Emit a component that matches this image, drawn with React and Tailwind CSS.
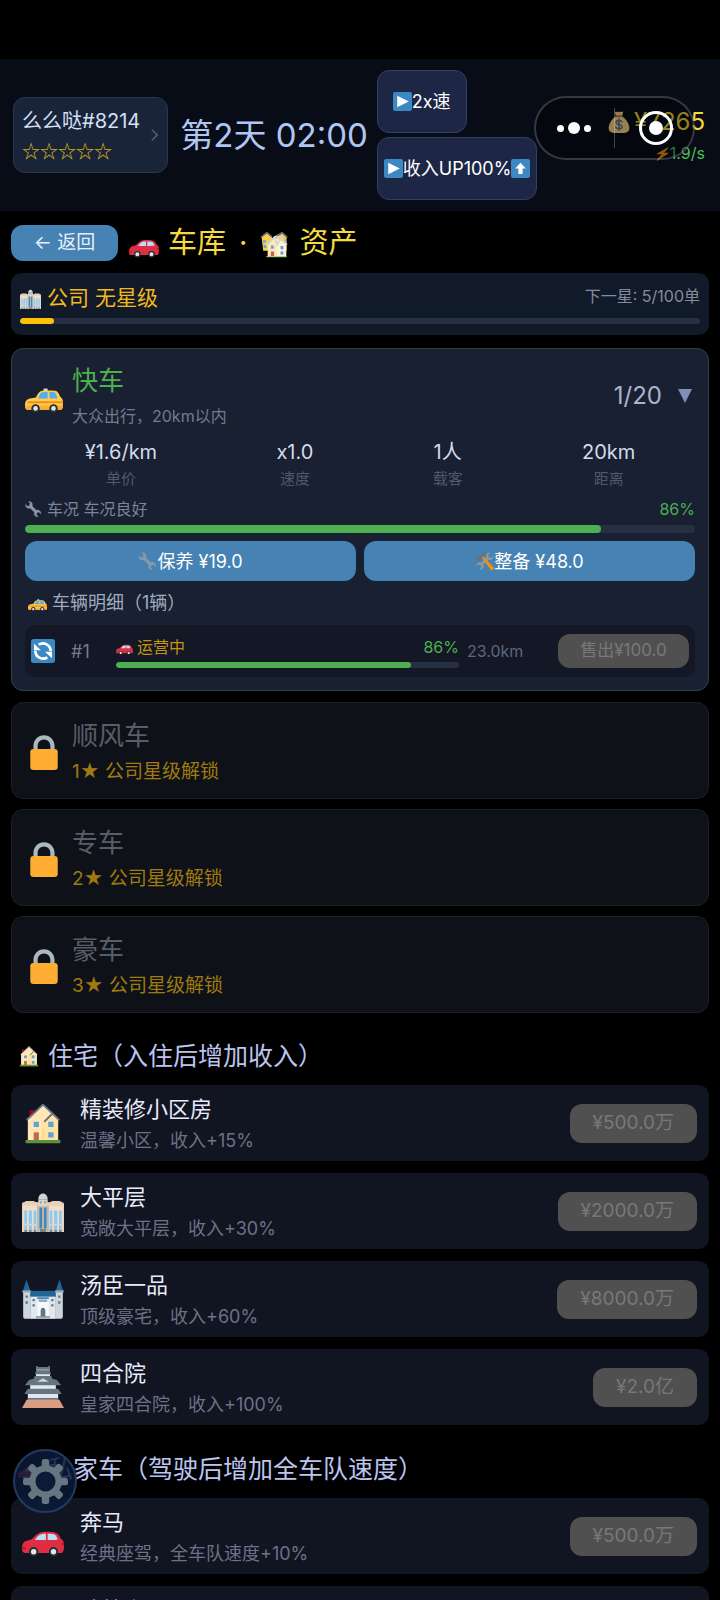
const FONT = "font-['Inter','Noto_Sans_CJK_SC',sans-serif]";

function Icon({ className, children }) {
  return (
    <svg viewBox="0 0 36 36" className={`shrink-0 ${className}`} aria-hidden="true">
      {children}
    </svg>
  );
}

function RedCar({ className }) {
  return (
    <Icon className={className}>
      <path fill="#DD2E44" d="M0 29c0-4 1-6 4-7 1.500-.5 3-.5 4.500-1.500 2-1.500 4.500-5 8-5.700 3-.5 8-.5 11.500.2 3 .6 4.500 3.500 5.500 5.500 2 1 2.500 3 2.500 6 0 3.500-.5 5.500-2 6H2.500C1 32.500 0 31.500 0 29z" />
      <path fill="#BBDDF5" d="M11 21.500c1.500-2.500 3.500-4.500 5.500-5 1.200-.3 2.500-.4 4-.4v5.400zM22 16.100c2 0 4 0 5.500.4 1.500.5 2.500 2.500 3 4.500-.8.5-5.500.5-8.500.5z" />
      <path fill="#A0041E" d="M0 27.500h3v2H.2zM33.500 24H36v2h-2z" opacity=".5" />
      <circle cx="10" cy="31.500" r="4" fill="#292F33" />
      <circle cx="27" cy="31.500" r="4" fill="#292F33" />
      <circle cx="10" cy="31.500" r="2.300" fill="#E1E8ED" />
      <circle cx="27" cy="31.500" r="2.300" fill="#E1E8ED" />
    </Icon>
  );
}

function Taxi({ className }) {
  return (
    <Icon className={className}>
      <g transform="translate(0 -2.500)">
        <rect x="17.500" y="12.500" width="4" height="3" rx="1" fill="#CCD6DD" />
        <path fill="#FFCC4D" d="M0 29c0-4 1-6 4.500-7 2-.6 4.500-.6 6-1.200C12 17.500 13.500 15 16 14.600c3-.4 10-.4 13 0 2 .4 3.500 3.400 4.500 6 2 .8 2.500 3 2.500 6 0 3.500-.5 5.400-2 5.900H2.500C.8 32.500 0 31 0 29z" />
        <path fill="#F4900C" d="M3.500 24.500H36v2H2c.3-1 .8-1.700 1.500-2z" />
        <path fill="#FFAC33" d="M0 28.500h36c0 2.500-.8 4-2 4H2.500C1 32.500 0 31 0 28.500z" />
        <path fill="#55ACEE" d="M12.500 22c.8-2.500 2-5.500 4-5.900 1.200-.2 3.500-.3 5-.3V22zM23.200 15.800c2 0 4 .1 5 .5 1 .4 2 3.200 2.500 5.700h-7.500z" />
        <circle cx="10" cy="31.300" r="4" fill="#292F33" />
        <circle cx="27" cy="31.300" r="4" fill="#292F33" />
        <circle cx="10" cy="31.300" r="2.200" fill="#E1E8ED" />
        <circle cx="27" cy="31.300" r="2.200" fill="#E1E8ED" />
      </g>
    </Icon>
  );
}

function House({ className }) {
  return (
    <Icon className={className}>
      <path fill="#A0041E" d="M6.500 7h4v7h-4z" />
      <path fill="#FFE8B6" d="M5 14.500 18 2.500l13 12V33H5z" />
      <path fill="#FFD983" d="M16.500 18.500 26 9.500l5 5V33H16.500z" opacity=".35" />
      <path fill="none" stroke="#66757F" strokeWidth="1.600" strokeLinecap="round" strokeLinejoin="round" d="M4.500 15 18 2.300 31.500 15M19.500 16.500l6-6" />
      <path fill="#5DA2D9" d="M10 17h4.500v4.500H10zM22.500 17H27v4.500h-4.500zM22.500 26H27v4.500h-4.500z" />
      <path fill="#C1694F" d="M10 26h4.500v7H10z" />
      <path fill="#FFCC4D" d="M17.500 22h1v11h-1z" opacity=".6" />
      <rect x="3" y="32.500" width="30" height="2.800" rx=".8" fill="#5C913B" />
    </Icon>
  );
}

function Houses({ className }) {
  return (
    <Icon className={className}>
      <path fill="#FFCC4D" d="M2 10 8.500 5l7 6v16H4z" />
      <path fill="#FFCC4D" d="M21 10l7-5 5 5v17H21z" />
      <path fill="none" stroke="#66757F" strokeWidth="1.800" strokeLinejoin="round" d="m1 10.500 7.500-6 6 5M20 8.500l7.500-4 6.500 6" />
      <path fill="#55ACEE" d="M4 13.500h3V17H4zM4.500 20H8v3.500H4.500zM30 13h2.500v3.500H30z" />
      <path fill="#FFE8B6" d="M9.500 19 19 9.500l13.500 10V34h-23z" />
      <path fill="#FFF3D6" d="M21 20.500 26 14l6.500 6V34H21z" />
      <path fill="none" stroke="#CCD6DD" strokeWidth="2" strokeLinejoin="round" strokeLinecap="round" d="M8.500 20 18.500 9.500H26L33 19M18.500 9.500 21 20l5.500-8" />
      <path fill="#5DA2D9" d="M13.500 20.500H17v4h-3.500zM25.500 21H29v4h-3.500zM25.500 28H29v3.500h-3.500z" />
      <path fill="#C1694F" d="M13.500 28h4v6h-4z" />
      <path fill="#A6D388" d="M8 33.500h25V35H8z" />
    </Icon>
  );
}

function Tower({ className }) {
  return (
    <Icon className={className}>
      <path fill="#CCD6DD" d="M14 8c0-3 1.800-5 4-5s4 2 4 5z" />
      <path fill="#E6D3BB" d="M0 12c0-1.200 1-1.500 2-1.500.5-1 2-1 3-1h4.500c1 0 1.500 1 3.500 1h1V8h8v2.500h1c2 0 2.500-1 3.500-1H31c1 0 2.500 0 3 1 1 0 2 .3 2 1.500V36H0z" />
      <path fill="#FFE8D0" d="M1 13.500h12V34H1zM23 13.500h12V34H23z" opacity=".5" />
      <path fill="#88C9F9" d="M2 17.500h2.300V34H2zM5.800 17.500h2.700V34H5.800zM10 17.500h2.300V34H10zM23.700 17.500H26V34h-2.300zM27.500 17.500h2.700V34h-2.700zM31.700 17.500H34V34h-2.300z" />
      <path fill="#CCB8A0" d="M14 14h8v22h-8z" />
      <path fill="#3B88C3" d="M15 15h2.200v18H15zM18.800 15H21v18h-2.200z" />
      <path fill="#5DADEC" d="M15.500 9.500h1.300v2h-1.300zM19.200 9.500h1.300v2h-1.300z" />
      <path fill="#E6D3BB" d="M0 29h14v1.200H0zM22 29h14v1.200H22z" />
      <path fill="#99AAB5" d="M13.300 13h.8v23h-.8zM21.900 13h.8v23h-.8z" />
      <path fill="#66757F" d="M2 34h2.300v2H2zM6 34h2.300v2H6zM10 34h2.300v2H10zM15.500 33.500h5V36h-5zM23.700 34H26v2h-2.300zM27.700 34H30v2h-2.300zM31.700 34H34v2h-2.300z" opacity=".8" />
    </Icon>
  );
}

function Castle({ className }) {
  return (
    <Icon className={className}>
      <path fill="#226699" d="M6 11h24v5.500H6z" />
      <path fill="#CCD6DD" d="M1 12h6v23H3c-1.200 0-2-.8-2-2zM29 12h6v21c0 1.200-.8 2-2 2h-4z" />
      <path fill="#E1E8ED" d="M7 16h22v19H7z" />
      <path fill="#F5F8FA" d="M13 20h10v15H13z" />
      <path fill="#269" d="M3.800 1.500 7.300 11H.8zM32.200 1.500 35.300 11h-6.500z" />
      <path fill="#99AAB5" d="M.3 10.500h7.200v2H.3zM28.500 10.500h7.200v2h-7.200z" />
      <path fill="#3B88C3" d="M13 16.500h10V18H13z" />
      <path fill="#66757F" d="M3 15h2v2H3zM3 20h2v2H3zM31 15h2v2h-2zM31 20h2v2h-2zM9 18h2v2H9zM9 22.500h2v2H9zM25 18h2v2h-2zM25 22.500h2v2h-2z" />
      <path fill="#99AAB5" d="M14.500 18.500h7v2h-7zM12 32.500h12V35H12z" />
      <path fill="#66757F" d="M16 28c0-1.500.8-2.500 2-2.500s2 1 2 2.500v5h-4z" />
    </Icon>
  );
}

function Pagoda({ className }) {
  return (
    <Icon className={className}>
      <path fill="#E1E8ED" d="M12 6h12v5H12zM7 14h22v6H7zM5 22h26v7H5z" />
      <path fill="#66757F" d="M12 0h1.500v.8h9V0H24v4.500l1 2.500H11l1-2.500zM11 8.500h14l1 2.500 4 1 3.500 4.500h-31L6 12l4-1z" />
      <path fill="#8899A6" d="M12.500 2.500h11v1.500h-11z" />
      <path fill="#CCD6DD" d="m18 10.500 5 3H13z" />
      <path fill="#66757F" d="M5 19.500h26l3 4.500H2zM5 27.500h26V29H5z" />
      <path fill="#D99E82" d="M4 29h28l4 7H0z" />
    </Icon>
  );
}

function Lock({ className }) {
  return (
    <Icon className={className}>
      <path fill="#AAB8C2" d="M18 3C12.500 3 8 7.500 8 13v10h4V13c0-3.300 2.700-6 6-6s6 2.700 6 6v10h4V13c0-5.500-4.500-10-10-10z" />
      <rect x="5" y="16" width="26" height="20" rx="3" fill="#FFAC33" />
    </Icon>
  );
}

const WRENCH =
  "M9.800 1.200c3.500-.6 7 1.600 7.700 5.300.3 1.600.1 3-.5 4.300l9 9c1.300-.6 2.900-.8 4.400-.4 3.400.8 5.500 4 5.200 7.400l-4.200-3.300-4.300 1-1 4.300 3.300 4.500c-3.600.6-7-1.600-7.700-5.300-.3-1.500-.1-2.900.4-4.100l-9.200-9.200c-1.300.6-2.800.8-4.300.4C5 14.300 2.800 11 3.300 7.500l4.200 3.600 4.300-1.300 1-4.300z";

function Wrench({ className }) {
  return (
    <Icon className={className}>
      <path fill="#8899A6" stroke="#8899A6" strokeWidth="1" d={WRENCH} transform="translate(-2 0)" />
    </Icon>
  );
}

function Tools({ className }) {
  return (
    <Icon className={className}>
      <path fill="#8899A6" d={WRENCH} transform="matrix(-1 0 0 1 38 0)" />
      <path fill="#F4900C" d="m13 11 3-3 19 21c1 1.200 1 2.500 0 3.500l-1.500 1.500c-1 1-2.300 1-3.300 0z" />
      <path fill="#66757F" d="M2 14 14.500 2.500C17 1 21 1.500 23 3c-3 0-4.500 1.500-5 3.500L9 15.500l-3.500 2z" />
    </Icon>
  );
}

function Cycle({ className }) {
  return (
    <Icon className={className}>
      <rect width="36" height="36" rx="4" fill="#3B88C3" />
      <path fill="none" stroke="#fff" strokeWidth="4" d="M11.500 8.500C19 3.500 29.500 9 29.500 18.500M24.500 27.500C17 32.500 6.500 27 6.500 17.500" />
      <path fill="#fff" d="M4.500 7v10H15zM31.500 29V19H21z" />
    </Icon>
  );
}

function Play({ className }) {
  return (
    <Icon className={className}>
      <rect width="36" height="36" rx="4" fill="#3B88C3" />
      <path fill="#fff" d="m8 7 22 11L8 29z" />
    </Icon>
  );
}

function ArrowUp({ className }) {
  return (
    <Icon className={className}>
      <rect width="36" height="36" rx="4" fill="#3B88C3" />
      <path fill="#fff" d="M18 7 8 18h6v10.500h8V18h6z" />
    </Icon>
  );
}

function MoneyBag({ className }) {
  return (
    <Icon className={className}>
      <path fill="#FDD888" d="M23 9c7 4 12 13 12 19 0 5-3 8-9 8H10c-6 0-9-3-9-8C1 22 6 13 13 9z" />
      <path fill="#FDD888" d="M11 1c2 1.500 3 .5 4-.3 1 1 2 1.300 3 .3 1 1 2 .7 3-.3 1 .8 2 1.800 4 .3l-2 7H13z" />
      <path fill="#BF6952" d="M12 7h12v3H12z" />
      <path fill="none" stroke="#67757F" strokeWidth="2.600" strokeLinecap="round" d="M23 18c-1-2-3-2.500-5-2.500-2.700 0-4.700 1.200-4.700 3.300 0 4.700 9.700 2.200 9.700 6.900 0 2.200-2.300 3.300-5 3.300-2.500 0-4.500-.8-5.300-2.800M18 13v18.500" />
    </Icon>
  );
}

function Bolt({ className }) {
  return (
    <Icon className={className}>
      <path fill="#F4900C" d="M31 3 5 18c-1 .8-.8 2 .5 2H16L5 33c-.8 1.200.2 2 1.500 1.500L32 18c1-.8.6-2-.7-2H22l10-11c1-1.300.2-2.500-1-2z" />
    </Icon>
  );
}

function Gear({ className }) {
  return (
    <Icon className={className}>
      <g fill="#66757F">
        <circle cx="18" cy="18" r="13" />
        <rect x="15" y="0" width="6" height="36" rx="2" />
        <rect x="15" y="0" width="6" height="36" rx="2" transform="rotate(45 18 18)" />
        <rect x="15" y="0" width="6" height="36" rx="2" transform="rotate(90 18 18)" />
        <rect x="15" y="0" width="6" height="36" rx="2" transform="rotate(135 18 18)" />
      </g>
      <circle cx="18" cy="18" r="8" fill="#0c1a38" />
    </Icon>
  );
}

const stats = [
  { value: "¥1.6/km", label: "单价" },
  { value: "x1.0", label: "速度" },
  { value: "1人", label: "载客" },
  { value: "20km", label: "距离" },
];

const lockedCars = [
  { name: "顺风车", stars: 1 },
  { name: "专车", stars: 2 },
  { name: "豪车", stars: 3 },
];

const homes = [
  { icon: House, name: "精装修小区房", desc: "温馨小区，收入+15%", price: "¥500.0万" },
  { icon: Tower, name: "大平层", desc: "宽敞大平层，收入+30%", price: "¥2000.0万" },
  { icon: Castle, name: "汤臣一品", desc: "顶级豪宅，收入+60%", price: "¥8000.0万" },
  { icon: Pagoda, name: "四合院", desc: "皇家四合院，收入+100%", price: "¥2.0亿" },
];

const cars = [
  { icon: RedCar, name: "奔马", desc: "经典座驾，全车队速度+10%", price: "¥500.0万" },
  { icon: RedCar, name: "法拉利", desc: "极速跑车，全车队速度+20%", price: "¥2000.0万" },
];

function Bar({ percent, className, fill }) {
  return (
    <div className={`overflow-hidden rounded-full bg-[#263043] ${className}`}>
      <div className={`h-full rounded-full ${fill}`} style={{ width: `${percent}%` }} />
    </div>
  );
}

function LockedCard({ name, stars }) {
  return (
    <div className="flex items-center gap-[9px] rounded-xl border border-[#1a1f28] bg-[#0e1218] px-[13px] pt-[10px] pb-[9px]">
      <Lock className="size-[38px]" />
      <div className="pt-1">
        <div className="text-[26px] leading-[38px] text-[#5a5d68]">{name}</div>
        <div className="text-[19px] leading-[34px] text-[#a07a10]">{stars}★ 公司星级解锁</div>
      </div>
    </div>
  );
}

function AssetRow({ icon: Glyph, name, desc, price }) {
  return (
    <div className="flex items-center rounded-[10px] bg-[#111421] py-1 pr-3 pl-[11px]">
      <Glyph className="size-[42px]" />
      <div className="ml-4 flex-1 pt-[5px]">
        <div className="text-[22px] leading-[30px] text-[#e8ebfa]">{name}</div>
        <div className="text-[18px] leading-[33px] text-[#6a7288]">{desc}</div>
      </div>
      <button disabled className="h-[39px] rounded-xl bg-[#505050] px-[23px] text-[19px] text-[#787878]">
        {price}
      </button>
    </div>
  );
}

function Header() {
  return (
    <header className="relative flex items-center bg-[#080c17] py-[11px] pr-[15px] pl-[13px] whitespace-nowrap">
      <button className="flex h-[76px] items-center gap-1 rounded-xl border border-[#2a3650] bg-[#1a2439] pr-2 pl-2 text-left">
        <span>
          <span className="block text-[20px] leading-[30px] text-[#d5e0f8]">么么哒#8214</span>
          <span className="block font-['Noto_Sans_CJK_SC'] text-[18px] leading-[28px] text-[#d4b41c]">☆☆☆☆☆</span>
        </span>
        <svg viewBox="0 0 10 16" className="ml-[6px] h-[14px] w-[9px] fill-none stroke-[#4f5b74] stroke-2" aria-hidden="true">
          <path d="m2 2 6 6-6 6" />
        </svg>
      </button>
      <div className="ml-3 text-[33px] leading-[40px] text-[#b0c6f2]">第2天 02:00</div>
      <div className="ml-[9px] flex flex-col items-start gap-1">
        <button className="flex h-[63px] items-center rounded-xl border border-[#333f60] bg-[#1d2745] px-[15px] text-[18px] text-white">
          <Play className="size-[19px]" />
          2x速
        </button>
        <button className="flex h-[63px] items-center rounded-xl border border-[#333f60] bg-[#1d2745] px-[6px] text-[18px] text-white">
          <Play className="size-[19px]" />
          收入UP100%
          <ArrowUp className="size-[19px]" />
        </button>
      </div>
      <div className="ml-auto flex flex-col items-end">
        <div className="flex items-center gap-1 text-[24px] leading-[36px] text-[#f5d936]">
          <MoneyBag className="size-[22px]" />
          ¥7265
        </div>
        <div className="flex items-center text-[16px] leading-[26px] text-[#4cbf58]">
          <Bolt className="size-[15px]" />
          1.9/s
        </div>
      </div>
      {/* host app capsule menu floats above the page */}
      <div className="absolute top-[37px] right-[25px] flex h-[64px] w-[161px] items-center rounded-full border-2 border-white/20 bg-black/40">
        <button aria-label="更多" className="flex flex-1 items-center justify-center gap-1 pr-[3px]">
          <span className="size-[7px] rounded-full bg-white" />
          <span className="size-[12px] rounded-full bg-white" />
          <span className="size-[7px] rounded-full bg-white" />
        </button>
        <span className="h-[40px] w-px bg-white/25" />
        <button aria-label="关闭" className="flex flex-1 items-center justify-center pl-[3px]">
          <span className="flex size-[34px] items-center justify-center rounded-full border-[3px] border-white">
            <span className="size-[14px] rounded-full bg-white" />
          </span>
        </button>
      </div>
    </header>
  );
}

function ExpressCard() {
  return (
    <section className="mt-[13px] rounded-xl border border-[#27463f] bg-[#182031] px-[13px] pt-[14px] pb-[13px]">
      <div className="flex items-center">
        <Taxi className="size-[38px]" />
        <div className="ml-[9px] flex-1">
          <h2 className="text-[26px] leading-[36px] text-[#4caf50]">快车</h2>
          <p className="mt-0.5 text-[16px] leading-[30px] text-[#737b8f]">大众出行，20km以内</p>
        </div>
        <button className="flex items-center gap-4 pb-[3px] text-[24px] text-[#aab4cc]" aria-label="1/20 展开">
          1/20
          <svg viewBox="0 0 14 14" className="mr-[3px] size-[14px] fill-[#8090b4]" aria-hidden="true">
            <path d="M0 0h14L7 14z" />
          </svg>
        </button>
      </div>

      <div className="mt-[7px] flex justify-around text-center">
        {stats.map((s) => (
          <div key={s.label}>
            <div className="text-[20px] leading-[28px] text-[#d3dbee]">{s.value}</div>
            <div className="text-[15px] leading-[25px] text-[#4f586c]">{s.label}</div>
          </div>
        ))}
      </div>

      <div className="mt-[6px] flex items-center text-[16px] leading-[24px] text-[#7b8499]">
        <Wrench className="mr-[5px] size-[17px]" />
        车况 车况良好
        <span className="ml-auto text-[#4caf50]">86%</span>
      </div>
      <Bar percent={86} className="mt-1 h-2" fill="bg-[#4caf50]" />

      <div className="mt-2 grid grid-cols-2 gap-2">
        <button className="flex h-[40px] items-center justify-center rounded-xl bg-[#4682b4] text-[18px] text-white">
          <Wrench className="size-[19px]" />
          保养 ¥19.0
        </button>
        <button className="flex h-[40px] items-center justify-center rounded-xl bg-[#4682b4] text-[18px] text-white">
          <Tools className="size-[19px]" />
          整备 ¥48.0
        </button>
      </div>

      <h3 className="mt-2 flex items-center pl-[3px] text-[18px] leading-[28px] text-[#a0aabf]">
        <Taxi className="mr-[5px] size-[19px]" />
        车辆明细（1辆）
      </h3>
      <div className="mt-2 flex h-[52px] items-center rounded-[10px] bg-[#131726] pr-[6px] pl-[6px]">
        <Cycle className="size-[24px]" />
        <span className="ml-4 w-[45px] text-[18px] text-[#737b8f]">#1</span>
        <div className="flex-1">
          <div className="flex items-center text-[16px] leading-[24px] text-[#c2950c]">
            <RedCar className="mr-1 size-[17px]" />
            运营中
            <span className="ml-auto text-[#4caf50]">86%</span>
          </div>
          <Bar percent={86} className="mt-[3px] h-[6px]" fill="bg-[#4caf50]" />
        </div>
        <span className="ml-2 w-[91px] text-[16px] text-[#5f677b]">23.0km</span>
        <button disabled className="h-[34px] w-[131px] rounded-xl bg-[#505050] text-[17px] text-[#787878]">
          售出¥100.0
        </button>
      </div>
    </section>
  );
}

export default function App() {
  return (
    <div className={`relative h-screen overflow-hidden bg-black pt-[59px] ${FONT}`}>
      <Header />
      <main className="px-[11px] pt-[14px]">
        <div className="flex h-[36px] items-center">
          <button className="h-[36px] w-[107px] rounded-xl bg-[#4682b4] text-[19px] text-[#e6f0fa]">← 返回</button>
          <h1 className="ml-[11px] flex items-center text-[29px] leading-[36px] text-[#f5dc3c]">
            <RedCar className="size-[30px]" />
            <span className="ml-[9px]">车库</span>
            <span className="mx-[13px]">·</span>
            <Houses className="size-[29px]" />
            <span className="ml-[10px]">资产</span>
          </h1>
        </div>

        <section className="mt-3 rounded-[10px] bg-[#111a28] px-[9px] pt-[9px] pb-[11px]">
          <div className="flex items-center text-[21px] leading-[32px] text-[#f5b81c]">
            <Tower className="mr-[6px] size-[21px]" />
            公司 无星级
            <span className="ml-auto self-start text-[16px] leading-[28px] text-[#848c9c]">下一星: 5/100单</span>
          </div>
          <Bar percent={5} className="mt-1 h-[6px]" fill="bg-[#ffc107]" />
        </section>

        <ExpressCard />

        <div className="mt-[11px] flex flex-col gap-[10px]">
          {lockedCars.map((c) => (
            <LockedCard key={c.name} {...c} />
          ))}
        </div>

        <h2 className="mt-[28px] mb-[14px] flex items-center pl-[7px] text-[25px] leading-[30px] text-[#bcc4f0]">
          <House className="mr-2 size-[22px]" />
          住宅（入住后增加收入）
        </h2>
        <div className="flex flex-col gap-3">
          {homes.map((h) => (
            <AssetRow key={h.name} {...h} />
          ))}
        </div>

        <h2 className="mt-[29px] mb-[14px] flex items-center pl-[7px] text-[25px] leading-[30px] text-[#bcc4f0]">
          <RedCar className="mr-2 size-[22px]" />
          私家车（驾驶后增加全车队速度）
        </h2>
        <div className="flex flex-col gap-3">
          {cars.map((c) => (
            <AssetRow key={c.name} {...c} />
          ))}
        </div>
      </main>

      <button
        aria-label="设置"
        className="absolute bottom-[87px] left-[13px] flex size-[64px] items-center justify-center rounded-full border-2 border-[#223a62] bg-[#0c1a38]/85"
      >
        <Gear className="size-[45px]" />
      </button>
    </div>
  );
}
